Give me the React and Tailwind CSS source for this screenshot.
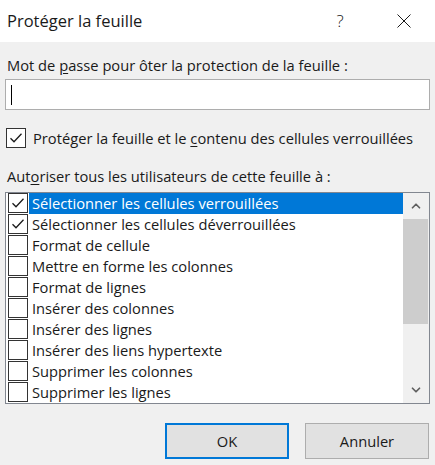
import { ChevronUp, ChevronDown } from "lucide-react";

const items = [
  { label: "Sélectionner les cellules verrouillées", checked: true, selected: true },
  { label: "Sélectionner les cellules déverrouillées", checked: true },
  { label: "Format de cellule" },
  { label: "Mettre en forme les colonnes" },
  { label: "Format de lignes" },
  { label: "Insérer des colonnes" },
  { label: "Insérer des lignes" },
  { label: "Insérer des liens hypertexte" },
  { label: "Supprimer les colonnes" },
  { label: "Supprimer les lignes" },
];

const Check = () => (
  <svg width="14" height="12" viewBox="0 0 14 12" fill="none">
    <path d="M1.5 6.2 L5 9.7 L12.5 1.8" stroke="#1a1a1a" strokeWidth="1.3" />
  </svg>
);

const Box = ({ checked }) => (
  <div className="w-[20px] h-[20px] shrink-0 border border-[#333333] bg-white flex items-center justify-center">
    {checked && <Check />}
  </div>
);

const App = () => {
  return (
    <div
      className="w-[435px] h-[465px] bg-[#f0f0f0] text-[#1a1a1a] text-[14.7px] leading-[20px] overflow-hidden"
      style={{ fontFamily: '"Open Sans", "Noto Sans", sans-serif' }}
    >
      {/* title bar */}
      <div className="h-[42px] bg-white flex items-center pl-[7px]">
        <p className="text-[16.5px] flex-1">Protéger la feuille</p>
        <span className="text-[17px] font-light w-[20px] text-center mr-[47px]">?</span>
        <svg width="14" height="14" viewBox="0 0 14 14" className="mr-[24px]">
          <path d="M0.5 0.5 L13.5 13.5 M13.5 0.5 L0.5 13.5" stroke="#1a1a1a" strokeWidth="1" />
        </svg>
      </div>

      <div className="px-[5px]">
        <p className="mt-[13px] pl-[2px]">
          Mot de <span className="underline underline-offset-2">p</span>asse pour ôter la protection de la feuille :
        </p>
        <div className="mt-[4px] h-[31px] bg-white border border-[#adadad] flex items-center pl-[5px]">
          <div className="w-[1px] h-[20px] bg-black" />
        </div>

        <div className="mt-[18px] flex items-center gap-[7px] pl-[1px]">
          <Box checked />
          <p>
            Protéger la feuille et le <span className="underline underline-offset-2">c</span>ontenu des cellules verrouillées
          </p>
        </div>

        <p className="mt-[18px] pl-[2px]">
          Aut<span className="underline underline-offset-2">o</span>riser tous les utilisateurs de cette feuille à :
        </p>

        <div className="mt-[6px] h-[212px] border border-[#828790] bg-white flex">
          <div className="flex-1 flex flex-col">
            {items.map((it) => (
              <div key={it.label} className="h-[21px] flex pl-[2px] gap-[1px]">
                <Box checked={it.checked} />
                <div className={"flex-1 h-[21px] pl-[3px] " + (it.selected ? "bg-[#0078d7] text-white" : "")}>
                  {it.label}
                </div>
              </div>
            ))}
          </div>
          <div className="w-[26px] bg-[#f0f0f0] flex flex-col">
            <div className="h-[26px] flex items-center justify-center">
              <ChevronUp size={14} strokeWidth={3} color="#606060" />
            </div>
            <div className="h-[105px] bg-[#cdcdcd] mr-[1px]" />
            <div className="flex-1" />
            <div className="h-[26px] flex items-center justify-center">
              <ChevronDown size={14} strokeWidth={3} color="#606060" />
            </div>
          </div>
        </div>

        <div className="mt-[19px] flex justify-end gap-[16px] pr-[1px]">
          <button className="w-[124px] h-[36px] bg-[#e1e1e1] border-2 border-[#0078d7]">OK</button>
          <button className="w-[124px] h-[36px] bg-[#e1e1e1] border border-[#adadad]">Annuler</button>
        </div>
      </div>
    </div>
  );
};

export default App;
